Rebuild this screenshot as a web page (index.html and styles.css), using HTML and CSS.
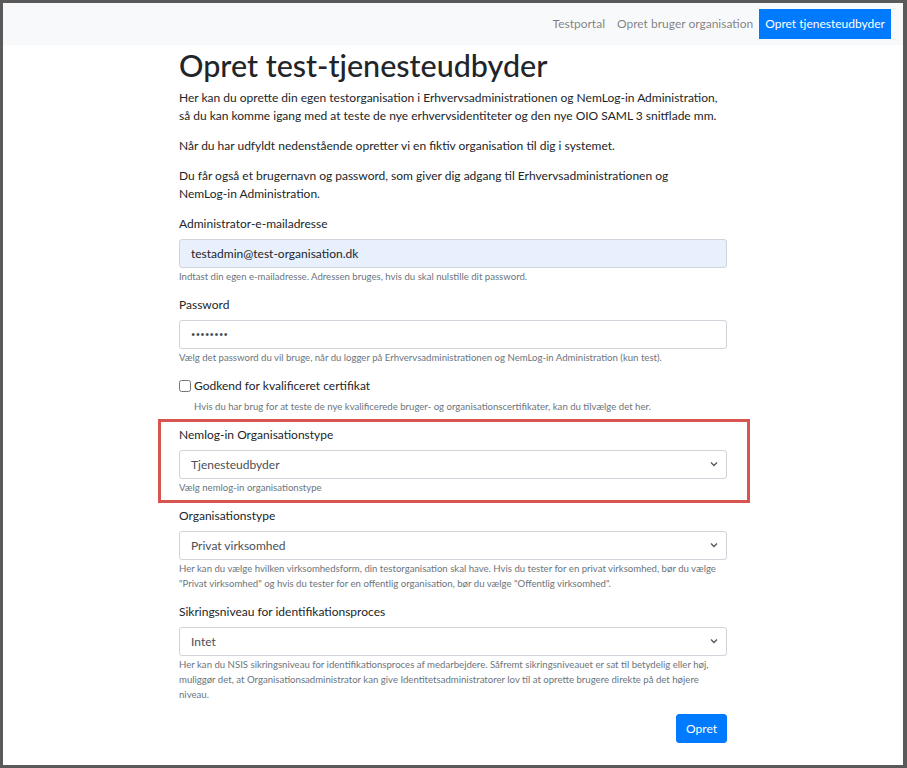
FILE: index.html
```html
<!DOCTYPE html>
<html lang="da">
<head>
  <meta charset="UTF-8" />
  <meta name="viewport" content="width=device-width, initial-scale=1.0"/>
  <title>Opret test-tjenesteudbyder</title>
  <link rel="stylesheet" href="styles.css">
</head>
<body>
  <div class="page">

    <!-- Top navigation -->
    <nav class="topnav">
      <a href="#" class="nav-link">Testportal</a>
      <a href="#" class="nav-link">Opret bruger organisation</a>
      <a href="#" class="nav-link active">Opret tjenesteudbyder</a>
    </nav>

    <main class="content">
      <h1>Opret test-tjenesteudbyder</h1>
      <p>Her kan du oprette din egen testorganisation i Erhvervsadministrationen og NemLog-in Administration, så du kan komme igang med at teste de nye erhvervsidentiteter og den nye OIO SAML 3 snitflade mm.</p>
      <p>Når du har udfyldt nedenstående opretter vi en fiktiv organisation til dig i systemet.</p>
      <p>Du får også et brugernavn og password, som giver dig adgang til Erhvervsadministrationen og <span class="nowrap">NemLog-in</span> Administration.</p>

      <form>
        <div class="form-group">
          <label for="email">Administrator-e-mailadresse</label>
          <input type="email" id="email" class="form-control autofilled" value="testadmin@test-organisation.dk" />
          <small class="help">Indtast din egen e-mailadresse. Adressen bruges, hvis du skal nulstille dit password.</small>
        </div>

        <div class="form-group">
          <label for="password">Password</label>
          <input type="password" id="password" class="form-control secret" value="12345678" />
          <small class="help">Vælg det password du vil bruge, når du logger på Erhvervsadministrationen og NemLog-in Administration (kun test).</small>
        </div>

        <div class="form-group form-check">
          <input type="checkbox" id="qualified" class="check-input" />
          <label for="qualified" class="check-label">Godkend for kvalificeret certifikat</label>
          <small class="help">Hvis du har brug for at teste de nye kvalificerede bruger- og organisationscertifikater, kan du tilvælge det her.</small>
        </div>

        <div class="form-group highlighted">
          <label for="nemlogType">Nemlog-in Organisationstype</label>
          <div class="select-wrap">
            <select id="nemlogType" class="form-control">
              <option>Tjenesteudbyder</option>
            </select>
            <svg class="chevron" width="8" height="6" viewBox="0 0 8 6"><path d="M1 1.5 L4 4.5 L7 1.5" fill="none" stroke="#555" stroke-width="1.3"/></svg>
          </div>
          <small class="help">Vælg nemlog-in organisationstype</small>
        </div>

        <div class="form-group">
          <label for="orgType">Organisationstype</label>
          <div class="select-wrap">
            <select id="orgType" class="form-control">
              <option>Privat virksomhed</option>
              <option>Offentlig virksomhed</option>
            </select>
            <svg class="chevron" width="8" height="6" viewBox="0 0 8 6"><path d="M1 1.5 L4 4.5 L7 1.5" fill="none" stroke="#555" stroke-width="1.3"/></svg>
          </div>
          <small class="help">Her kan du vælge hvilken virksomhedsform, din testorganisation skal have. Hvis du tester for en privat virksomhed, bør du vælge "Privat virksomhed" og hvis du tester for en offentlig organisation, bør du vælge "Offentlig virksomhed".</small>
        </div>

        <div class="form-group">
          <label for="nsis">Sikringsniveau for identifikationsproces</label>
          <div class="select-wrap">
            <select id="nsis" class="form-control">
              <option>Intet</option>
            </select>
            <svg class="chevron" width="8" height="6" viewBox="0 0 8 6"><path d="M1 1.5 L4 4.5 L7 1.5" fill="none" stroke="#555" stroke-width="1.3"/></svg>
          </div>
          <small class="help">Her kan du NSIS sikringsniveau for identifikationsproces af medarbejdere. Såfremt sikringsniveauet er sat til betydelig eller høj, muliggør det, at Organisationsadministrator kan give Identitetsadministratorer lov til at oprette brugere direkte på det højere niveau.</small>
        </div>

        <div class="actions">
          <button type="submit" class="btn-primary">Opret</button>
        </div>
      </form>
    </main>
  </div>
</body>
</html>
```

FILE: styles.css
```css
html, body {
  margin: 0;
  height: 100%;
}
body {
  background-color: #5a5a5a;
  font-family: Lato, "Noto Sans", Arial, sans-serif;
  font-size: 12px;
  line-height: 18px;
  color: #212529;
}
.page {
  margin: 3px 4px 0 3px;
  height: calc(100% - 6px);
  background-color: #fff;
  overflow: hidden;
}
.nowrap {
  white-space: nowrap;
}

/* navbar */
.topnav {
  display: flex;
  justify-content: flex-end;
  padding: 6px 12px;
  background-color: #f8f9fa;
}
.nav-link {
  padding: 6px;
  color: rgba(0, 0, 0, 0.5);
  text-decoration: none;
}
.nav-link.active {
  background-color: #007bff;
  color: #fff;
}

/* main column */
.content {
  width: 548px;
  margin: 0 auto;
  padding-top: 2px;
}
h1 {
  margin: 0 0 6px;
  font-size: 30.5px;
  font-weight: 500;
  line-height: 36px;
}
p {
  margin: 0 0 12px;
}

/* form */
.form-group {
  margin-bottom: 12px;
}
label {
  display: inline-block;
  margin-bottom: 6px;
}
.form-control {
  display: block;
  box-sizing: border-box;
  width: 100%;
  height: 28.5px;
  padding: 4.5px 11px;
  font-family: inherit;
  font-size: 12px;
  line-height: 18px;
  color: #495057;
  background-color: #fff;
  border: 1px solid #ced4da;
  border-radius: 3px;
}
.form-control.autofilled {
  background-color: #e8f0fe;
  color: #212529;
}
.form-control.secret {
  font-size: 7.5px;
  letter-spacing: 0.3px;
}
select.form-control {
  appearance: none;
  -webkit-appearance: none;
}
.select-wrap {
  position: relative;
}
.chevron {
  position: absolute;
  right: 9px;
  top: 11px;
  pointer-events: none;
}
.help {
  display: block;
  margin-top: 1.5px;
  font-size: 9.6px;
  line-height: 15px;
  color: #6c757d;
}
.form-check {
  position: relative;
  padding-left: 15px;
}
.form-check .help {
  margin-top: 4px;
}
.check-input {
  position: absolute;
  left: 0;
  top: 3px;
  width: 12px;
  height: 12px;
  margin: 0;
}
.check-label {
  margin-bottom: 0;
}

/* annotation frame round the organisation type field */
.highlighted {
  position: relative;
}
.highlighted::after {
  content: "";
  position: absolute;
  top: -7px;
  right: -23px;
  bottom: -8px;
  left: -21px;
  border: 3px solid #d9534f;
  pointer-events: none;
}

.actions {
  display: flex;
  justify-content: flex-end;
}
.btn-primary {
  padding: 4.5px 9px;
  font-family: inherit;
  font-size: 12px;
  line-height: 18px;
  color: #fff;
  background-color: #007bff;
  border: 1px solid #007bff;
  border-radius: 3px;
  cursor: pointer;
}
```
